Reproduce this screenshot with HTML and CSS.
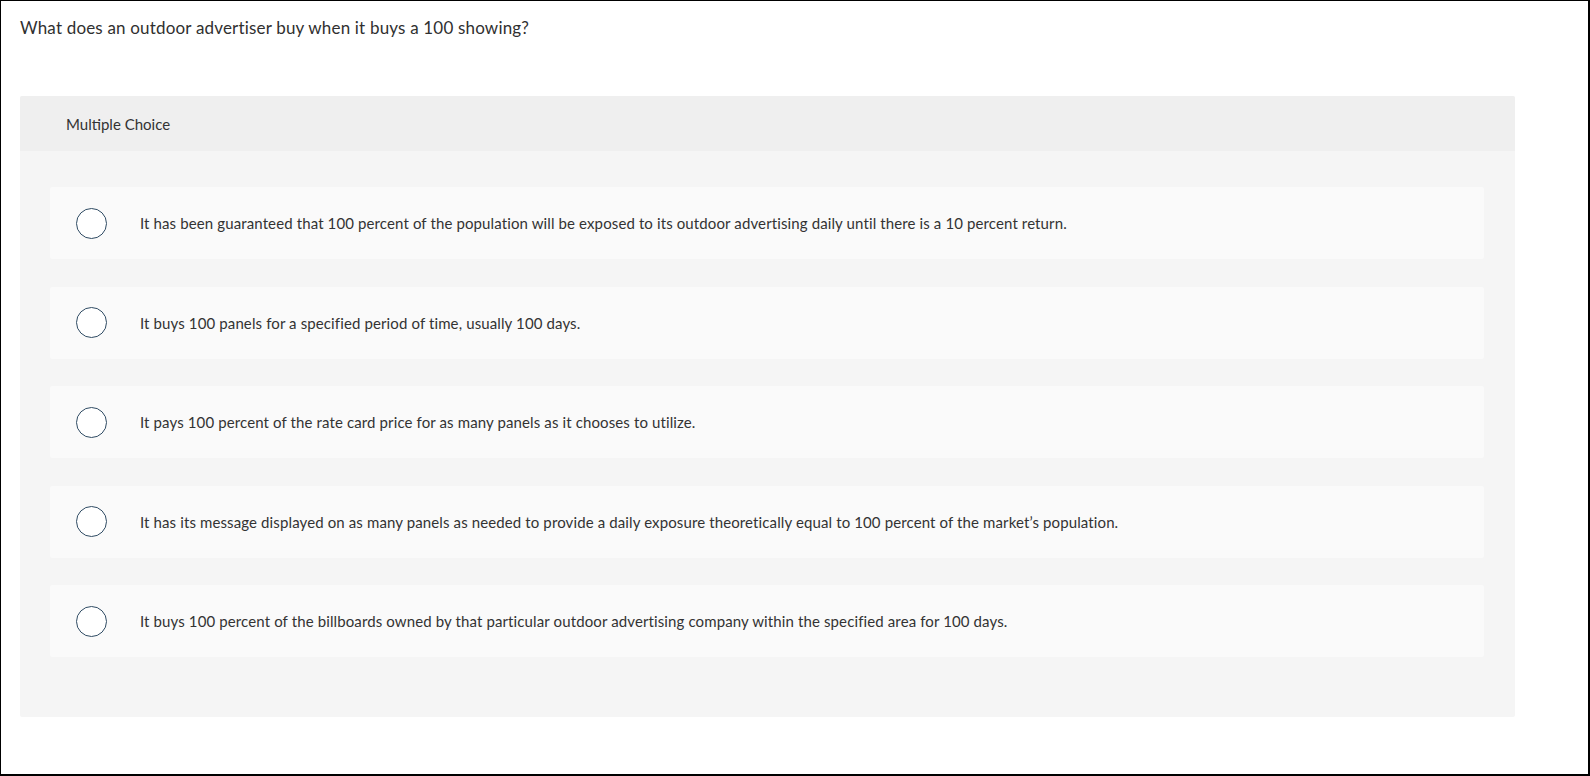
FILE: index.html
```html
<!DOCTYPE html>
<html lang="en">
<head>
<meta charset="utf-8">
<title>Multiple Choice</title>
<link rel="stylesheet" href="styles.css">
</head>
<body>
<div class="page">
  <p class="question">What does an outdoor advertiser buy when it buys a 100 showing?</p>
  <section class="panel">
    <header class="panel-head">Multiple Choice</header>
    <div class="panel-body">
      <label class="choice"><span class="radio"></span><span class="choice-text">It has been guaranteed that 100 percent of the population will be exposed to its outdoor advertising daily until there is a 10 percent return.</span></label>
      <label class="choice"><span class="radio"></span><span class="choice-text">It buys 100 panels for a specified period of time, usually 100 days.</span></label>
      <label class="choice"><span class="radio"></span><span class="choice-text">It pays 100 percent of the rate card price for as many panels as it chooses to utilize.</span></label>
      <label class="choice"><span class="radio"></span><span class="choice-text">It has its message displayed on as many panels as needed to provide a daily exposure theoretically equal to 100 percent of the market’s population.</span></label>
      <label class="choice"><span class="radio"></span><span class="choice-text">It buys 100 percent of the billboards owned by that particular outdoor advertising company within the specified area for 100 days.</span></label>
    </div>
  </section>
</div>
</body>
</html>
```

FILE: styles.css
```css
html, body {
  margin: 0;
  padding: 0;
  background: #ffffff;
}

.page {
  box-sizing: border-box;
  width: 1590px;
  height: 776px;
  border-top: 1px solid #000;
  border-left: 1px solid #000;
  border-right: 2px solid #000;
  border-bottom: 2px solid #000;
  padding: 15px 0 0 19px;
  font-family: Lato, "Liberation Sans", sans-serif;
  color: #333333;
}

.question {
  margin: 0;
  font-size: 17px;
  line-height: 24px;
  letter-spacing: 0.18px;
  height: 80px;
  color: #303030;
}

.panel {
  width: 1495px;
  background: #f5f5f5;
  border-radius: 2px;
}

.panel-head {
  box-sizing: border-box;
  height: 55px;
  background: #efefef;
  padding: 0 0 0 46px;
  display: flex;
  align-items: center;
  font-size: 15px;
  border-radius: 2px 2px 0 0;
}

.panel-body {
  padding: 36px 31px 60px 30px;
  display: flex;
  flex-direction: column;
  gap: 27.5px;
}

.choice {
  box-sizing: border-box;
  height: 72px;
  background: #fafafa;
  border-radius: 2px;
  display: flex;
  align-items: center;
  padding-left: 26px;
}

.radio {
  box-sizing: border-box;
  width: 31px;
  height: 31px;
  border: 1.5px solid #2f4b63;
  border-radius: 50%;
  background: #ffffff;
  flex: none;
}

.choice-text {
  margin-left: 33px;
  font-size: 15px;
  letter-spacing: 0.12px;
  color: #333333;
}
```
